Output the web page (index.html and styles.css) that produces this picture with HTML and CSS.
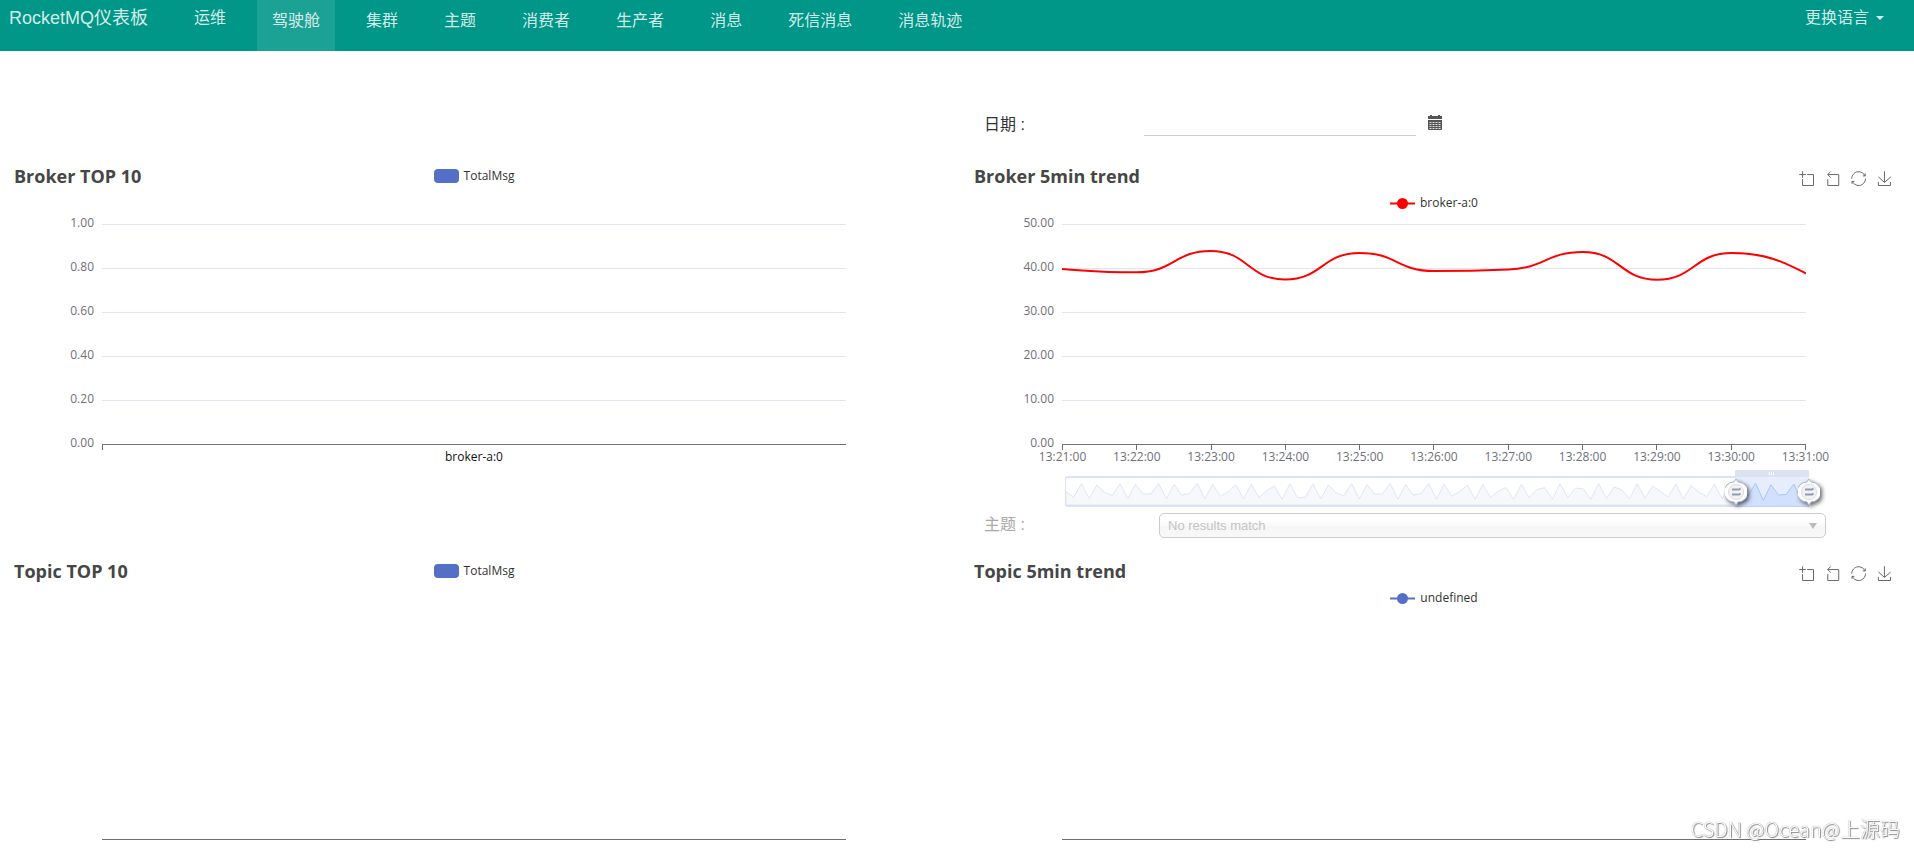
FILE: index.html
```html
<!DOCTYPE html>
<html lang="zh-CN">
<head>
<meta charset="utf-8">
<title>RocketMQ仪表板</title>
<link rel="stylesheet" href="styles.css">
</head>
<body>
<svg width="0" height="0" class="defs" aria-hidden="true">
  <symbol id="i-zoom" viewBox="-1 -1 61 61"><path d="M0,13.5h26.9 M13.5,26.9V0 M32.1,13.5H58V58H13.5 V32.1"/></symbol>
  <symbol id="i-back" viewBox="-1 -1 61 61"><path d="M22,1.4L9.9,13.5l12.3,12.3 M10.3,13.5H54.9v44.6 H10.3v-26"/></symbol>
  <symbol id="i-restore" viewBox="-1 -1 61 61"><path d="M47,18.9h9.8V8.7 M56.3,20.1 C52.1,9,40.5,0.6,26.8,2.1C12.6,3.7,1.6,16.2,2.1,30.6 M13,41.1H3.1v10.2 M3.7,39.9c4.2,11.1,15.8,19.5,29.5,18 c14.2-1.6,25.2-14.1,24.7-28.5"/></symbol>
  <symbol id="i-save" viewBox="-1 -1 61 61"><path d="M4.7,22.9L29.3,45.5L54.7,23.4M4.6,43.6L4.6,58L53.8,58L53.8,43.6M29.2,45.1L29.2,0"/></symbol>
  <symbol id="i-handle" viewBox="0 0 22 28">
    <path class="knob" d="M11 1 L13 4 A10 10 0 0 1 13 24 L11 27 L9 24 A10 10 0 0 1 9 4 Z"/>
    <path class="inner" d="M11 6.500a7.500 7.500 0 1 0 .1 0z"/>
    <path class="bars" d="M7 11.500h7l1.500-1M7 16.500h7l1.500-1"/>
  </symbol>
</svg>

<nav class="navbar">
  <a class="brand" href="#">RocketMQ仪表板</a>
  <ul class="menu">
    <li><a class="ops" href="#">运维</a></li>
    <li><a class="active" href="#">驾驶舱</a></li>
    <li><a href="#">集群</a></li>
    <li><a href="#">主题</a></li>
    <li><a href="#">消费者</a></li>
    <li><a href="#">生产者</a></li>
    <li><a href="#">消息</a></li>
    <li><a href="#">死信消息</a></li>
    <li><a href="#">消息轨迹</a></li>
  </ul>
  <button class="language" type="button">更换语言<span class="caret"></span></button>
</nav>

<main class="dashboard">
  <form class="filter date-filter">
    <label for="date">日期 :</label>
    <input id="date" type="text">
    <button type="button" class="calendar" aria-label="日期">
      <svg width="14" height="15" viewBox="0 0 14 15"><path fill="#555" d="M0 1h2V0h2v1h6V0h2v1h2v3H0zM0 5h14v9a1 1 0 0 1-1 1H1a1 1 0 0 1-1-1z"/><path stroke="#ddd" stroke-dasharray="2 1" d="M1.500 7.500h11M1.500 9.500h11M1.500 11.500h11M1.500 13.500h11"/></svg>
    </button>
  </form>

  <section class="chart">
    <header class="chart-head">
      <h2>Broker TOP 10</h2>
      <div class="legend"><span class="swatch"></span>TotalMsg</div>
    </header>
    <div class="y-axis"><span>1.00</span><span>0.80</span><span>0.60</span><span>0.40</span><span>0.20</span><span>0.00</span></div>
    <div class="plot"><i></i><i></i><i></i><i></i><i></i></div>
    <div class="x-axis single"><span>broker-a:0</span></div>
  </section>

  <section class="chart">
    <header class="chart-head">
      <h2>Broker 5min trend</h2>
      <div class="legend low"><svg width="25" height="14"><path d="M0 7.500H25" stroke="#f00" stroke-width="2"/><circle cx="12.500" cy="7.500" r="5.500" fill="#f00"/></svg>broker-a:0</div>
      <div class="toolbox">
        <button type="button" aria-label="Zoom"><svg><use href="#i-zoom"/></svg></button>
        <button type="button" aria-label="Zoom Reset"><svg><use href="#i-back"/></svg></button>
        <button type="button" aria-label="Restore"><svg><use href="#i-restore"/></svg></button>
        <button type="button" aria-label="Save"><svg><use href="#i-save"/></svg></button>
      </div>
    </header>
    <div class="y-axis"><span>50.00</span><span>40.00</span><span>30.00</span><span>20.00</span><span>10.00</span><span>0.00</span></div>
    <div class="plot"><i></i><i></i><i></i><i></i><i></i>
      <svg class="line" viewBox="0 0 744 220" preserveAspectRatio="none"><path d="M0 45C37 47.500 37 48.300 74.400 48.300C112 48.300 112 27 148.800 27C186 27 186 55.500 223.200 55.500C260 55.500 260 29 297.600 29C335 29 335 47 372 47C409 47 409 47 446.400 45.500C484 44 484 28 520.800 28C558 28 558 55.700 595.200 55.700C632 55.700 632 29 669.600 29C707 29 725 40 744 49.500"/></svg>
    </div>
    <div class="x-axis ticks"><span>13:21:00</span><span>13:22:00</span><span>13:23:00</span><span>13:24:00</span><span>13:25:00</span><span>13:26:00</span><span>13:27:00</span><span>13:28:00</span><span>13:29:00</span><span>13:30:00</span><span>13:31:00</span></div>
    <div class="slider">
      <svg class="shadow" viewBox="0 0 96 93" preserveAspectRatio="none"><path d="M0 93V47L1 66L2 19L3 70L4 24L5 50L6 60L7 19L8 71L9 22L10 55L11 55L12 19L13 72L14 22L15 59L16 53L17 18L18 72L19 21L20 63L21 48L22 23L23 72L24 21L25 67L26 43L27 28L28 73L29 20L30 68L31 66L32 20L33 71L34 24L35 52L36 61L37 19L38 72L39 23L40 55L41 55L42 19L43 73L44 23L45 59L46 53L47 19L48 73L49 21L50 63L51 46L52 25L53 73L54 22L55 67L56 45L57 33L58 74L59 21L60 68L61 40L62 33L63 73L64 20L65 67L66 35L67 37L68 73L69 19L70 70L71 31L72 41L73 72L74 19L75 70L76 28L77 46L78 65L79 21L80 73L81 26L82 49L83 64L84 21L85 72L86 25L87 52L88 58L89 19L90 72L91 24L92 56L93 54L94 22L95 73L96 32V93Z"/></svg>
      <div class="window">
        <div class="grip"><b></b><b></b><b></b></div>
        <svg class="selected" viewBox="86.300 0 9.700 93" preserveAspectRatio="none"><path d="M86 93V25L87 52L88 58L89 19L90 72L91 24L92 56L93 54L94 22L95 73L96 32V93Z"/></svg>
        <svg class="handle start"><use href="#i-handle"/></svg>
        <svg class="handle end"><use href="#i-handle"/></svg>
      </div>
    </div>
  </section>

  <form class="filter topic-filter">
    <label for="topic">主题 :</label>
    <div class="select-box"><select id="topic" disabled><option>No results match</option></select></div>
  </form>

  <section class="chart empty">
    <header class="chart-head">
      <h2>Topic TOP 10</h2>
      <div class="legend"><span class="swatch"></span>TotalMsg</div>
    </header>
    <div class="plot"></div>
  </section>

  <section class="chart empty">
    <header class="chart-head">
      <h2>Topic 5min trend</h2>
      <div class="legend low"><svg width="25" height="14"><path d="M0 7.500H25" stroke="#5470c6" stroke-width="2"/><circle cx="12.500" cy="7.500" r="5.500" fill="#5470c6"/></svg>undefined</div>
      <div class="toolbox">
        <button type="button" aria-label="Zoom"><svg><use href="#i-zoom"/></svg></button>
        <button type="button" aria-label="Zoom Reset"><svg><use href="#i-back"/></svg></button>
        <button type="button" aria-label="Restore"><svg><use href="#i-restore"/></svg></button>
        <button type="button" aria-label="Save"><svg><use href="#i-save"/></svg></button>
      </div>
    </header>
    <div class="plot"></div>
  </section>
</main>
<div class="watermark">CSDN @Ocean@上源码</div>
</body>
</html>
```
FILE: styles.css
```css
* { box-sizing: border-box; }
body {
  margin: 0;
  background: #fff;
  color: #333;
  font: 16px/24px "Liberation Sans", "Noto Sans CJK SC", sans-serif;
}
.defs { position: absolute; }
button { padding: 0; border: 0; background: none; font: inherit; color: inherit; }

/* navigation */
.navbar {
  display: flex;
  align-items: flex-start;
  height: 51px;
  padding: 0 30px 0 9px;
  background: #009688;
  color: rgba(255, 255, 255, .84);
}
.navbar a { color: inherit; text-decoration: none; }
.brand { font-size: 18px; line-height: 36px; }
.menu { display: flex; gap: 16px; margin: 0 auto 0 31px; padding: 0; list-style: none; }
.menu a { display: block; height: 51px; padding: 0 15px; line-height: 42px; }
.menu .ops { line-height: 36px; }
.menu .active { background: rgba(255, 255, 255, .11); }
.language { display: flex; align-items: center; gap: 7px; line-height: 36px; }
.caret { border: 4px solid transparent; border-top-color: currentColor; border-bottom: 0; }

/* page grid */
.dashboard {
  display: grid;
  grid-template-columns: 1fr 1fr;
  grid-template-rows: 113px 340px 55px auto;
  column-gap: 30px;
  padding: 0 15px 0 9px;
}
.filter { grid-column: 2; display: flex; align-items: flex-start; padding-left: 15px; }
.filter label { flex: none; width: 160px; line-height: 24px; }
.date-filter { padding-top: 61px; }
.date-filter label { padding-top: 1px; }
.date-filter input {
  width: 272px;
  height: 24px;
  border: 0;
  border-bottom: 1px solid #ccc;
  background: none;
  font: inherit;
}
.calendar { margin-left: 12px; line-height: 0; padding-top: 3px; }
.topic-filter { padding: 9px 73px 0 15px; }
.topic-filter label { width: 175px; color: #aaa; }
.select-box { position: relative; flex: 1; }
.select-box::after {
  content: "";
  position: absolute;
  right: 9px;
  top: 10px;
  border: 4px solid transparent;
  border-top: 6px solid #bbb;
  border-bottom: 0;
}
.select-box select {
  appearance: none;
  display: block;
  width: 100%;
  height: 25px;
  padding: 0 8px;
  border: 1px solid #ccc;
  border-radius: 5px;
  background: linear-gradient(#fff 20%, #f9f9f9 50%, #f6f6f6 52%, #f8f8f8);
  color: #c4c4c4;
  font: 13px "Liberation Sans", sans-serif;
  opacity: 1;
}

/* charts */
.chart {
  display: grid;
  grid-template-columns: 10% 1fr 10%;
  grid-template-rows: 60px 221px 31px 31px;
  color: #6e7079;
  font: 12px/16px "Open Sans", "Noto Sans", sans-serif;
}
.chart.empty { grid-template-rows: 60px 221px; }
.chart-head {
  grid-column: 1 / -1;
  display: grid;
  grid-template-columns: 1fr auto 1fr;
  grid-template-rows: 24px 34px;
  padding: 0 5px;
  color: #333;
}
.chart-head h2 { margin: 0; color: #464646; font-size: 18px; line-height: 24px; font-weight: 700; }
.legend { grid-column: 2; display: flex; align-items: center; gap: 5px; height: 24px; line-height: 20px; }
.legend.low { grid-row: 2; padding-top: 5px; }
.swatch { width: 25px; height: 14px; border-radius: 4px; background: #5470c6; }
.toolbox { grid-column: 3; grid-row: 1; justify-self: end; display: flex; gap: 11px; padding: 7px 2px 0 0; }
.toolbox button, .toolbox svg { display: block; width: 15px; height: 15px; }
.toolbox svg { fill: none; stroke: #666; stroke-width: 4px; overflow: visible; }
.y-axis {
  grid-column: 1;
  display: flex;
  flex-direction: column;
  justify-content: space-between;
  margin: -7px 8px -4px 0;
  line-height: 12px;
  text-align: right;
}
.plot {
  grid-column: 2;
  position: relative;
  display: grid;
  grid-template-rows: repeat(5, 44px);
  border-bottom: 1px solid #6e7079;
}
.plot i { border-top: 1px solid #e0e6f1; }
.line { position: absolute; inset: 0; width: 100%; height: 220px; }
.line path { fill: none; stroke: #f00; stroke-width: 2px; }
.x-axis { grid-column: 2; display: flex; justify-content: space-between; }
.x-axis span { padding-top: 6px; line-height: 12px; }
.single { justify-content: center; color: #111; position: relative; }
.single::before, .ticks span::before {
  content: "";
  position: absolute;
  top: 0;
  left: 0;
  height: 5px;
  border-left: 1px solid #6e7079;
}
.ticks span { position: relative; display: flex; justify-content: center; width: 1px; white-space: nowrap; }

/* range slider */
.slider {
  grid-column: 2;
  position: relative;
  margin: 0 -2px 0 3px;
  border: 1px solid #dbe3f3;
  border-width: 2px 1px;
  border-radius: 3px;
}
.shadow { display: block; width: 100%; height: 27px; }
.shadow path { fill: #f6f8fc; stroke: #e0e6f3; vector-effect: non-scaling-stroke; }
.window { position: absolute; top: -8px; right: -2px; width: 10%; height: 37px; background: #e6edfd; }
.grip {
  display: flex;
  align-items: center;
  justify-content: center;
  gap: 1px;
  height: 7px;
  border-radius: 2px 2px 0 0;
  background: #dbe2f1;
}
.grip b { width: 1px; height: 3px; background: #fff; }
.selected { display: block; width: 100%; height: 30px; }
.selected path { fill: #d3e0fd; stroke: #a9c6fb; vector-effect: non-scaling-stroke; }
.handle {
  position: absolute;
  top: 8px;
  width: 22px;
  height: 28px;
  filter: drop-shadow(2px 2px 2px rgba(0, 0, 0, .6));
}
.handle.start { left: -10px; }
.handle.end { right: -11px; }
.knob { fill: #fff; stroke: #acb8d1; stroke-width: 1px; }
.inner { fill: #f2f2f2; stroke: #ddd; }
.bars { fill: none; stroke: #8d9bb8; stroke-width: 2px; }

.watermark {
  position: fixed;
  right: 14px;
  bottom: 7px;
  color: #fff;
  font: 20px/28px "Liberation Sans", "Noto Sans CJK SC", sans-serif;
  font-family: "Noto Sans CJK SC", sans-serif;
  font-weight: 300;
  text-shadow: 0 0 1px #777, 1px 1px 1px #888;
}
```
